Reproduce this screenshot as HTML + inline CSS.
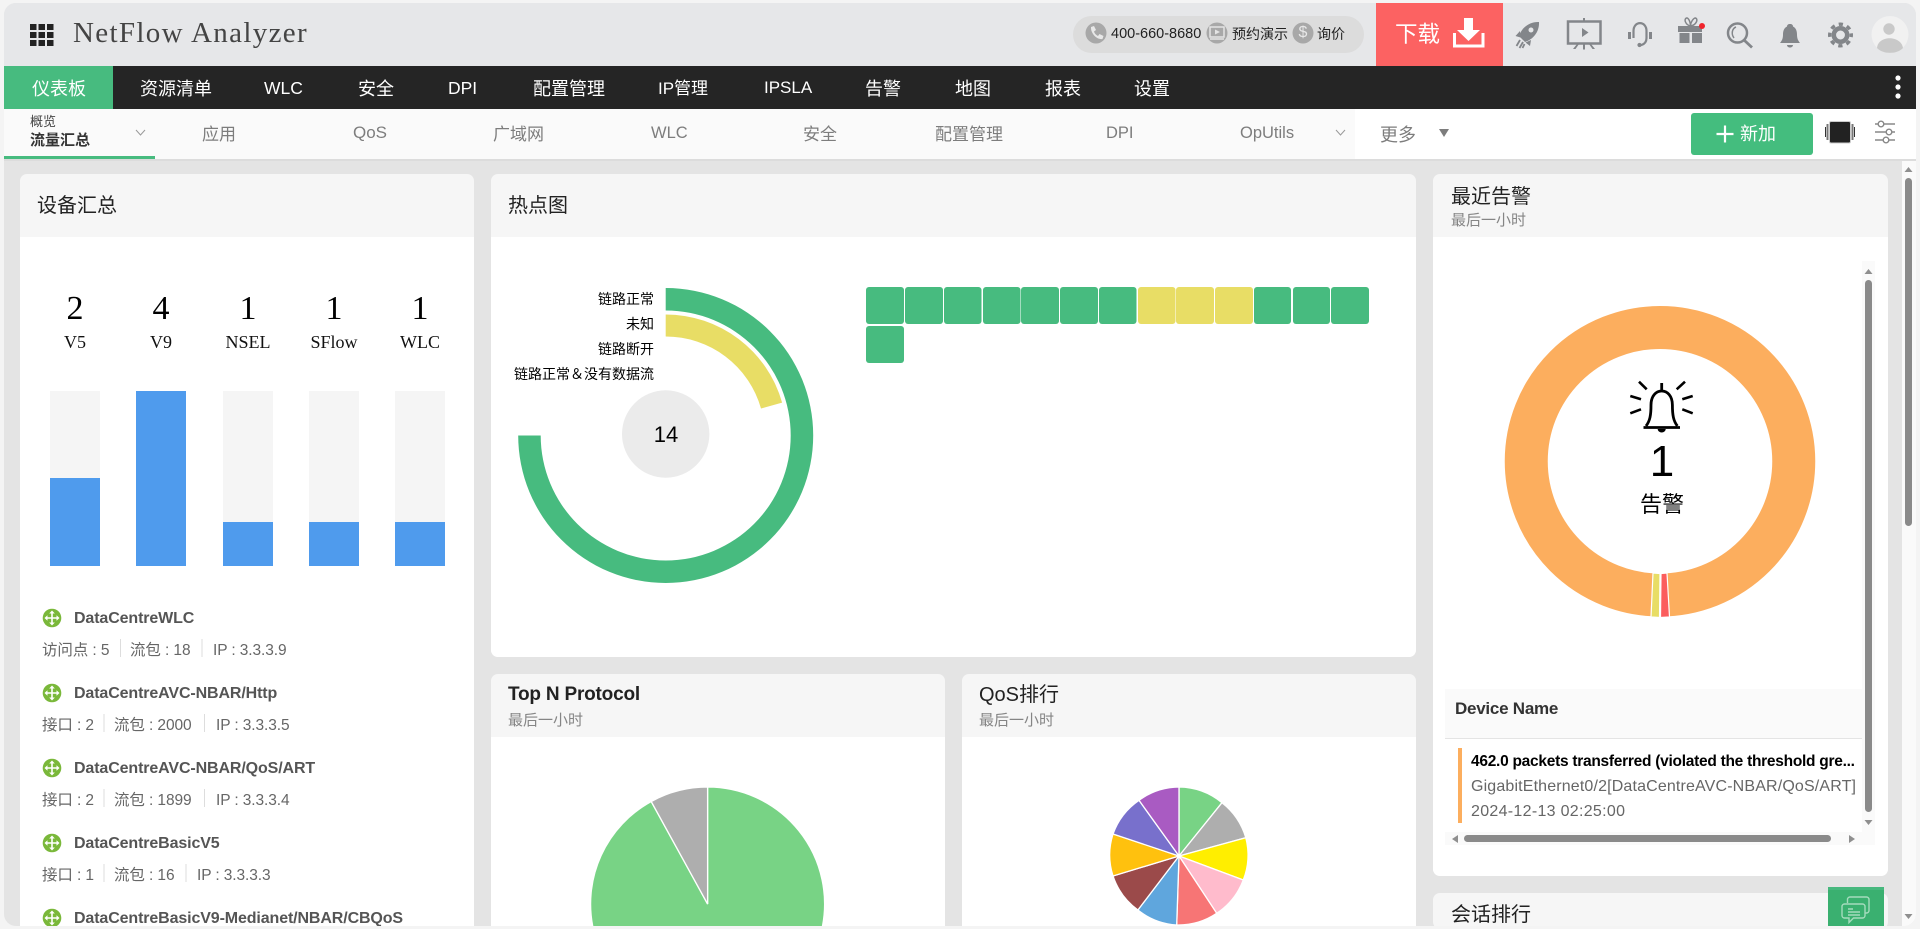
<!DOCTYPE html>
<html lang="zh"><head><meta charset="utf-8"><title>NetFlow Analyzer</title>
<style>
html,body{margin:0;padding:0;width:1920px;height:929px;overflow:hidden;background:#f4f4f4}
body{font-family:"Liberation Sans","Noto Sans CJK SC",sans-serif;color:#222}
#frame{position:absolute;left:4px;top:3px;width:1912px;height:923px;border-radius:12px;overflow:hidden;background:#e4e4e4}
#in{position:absolute;left:-4px;top:-3px;width:1920px;height:929px}
svg{position:absolute;left:0;top:0}
.t{position:absolute;white-space:nowrap;line-height:24px;height:24px}
.n{color:#fff;font-size:18px}
.s{color:#7d7d7d;font-size:17px}
.h{font-size:20px;color:#222}
.u{font-size:15px;color:#858585}
.l{font-size:14px;color:#000;text-align:right;width:150px;left:504px}
.d{font-size:16px;font-weight:700;color:#555;letter-spacing:-.12px;left:74px}
.m{font-size:15.5px;color:#666;letter-spacing:-.1px}
.c{text-align:center;width:80px}
.num{font-family:"Liberation Serif",serif;font-size:34px;color:#000}
.lab{font-family:"Liberation Serif",serif;font-size:18px;color:#111}
</style></head><body>
<div id="frame"><div id="in">
<svg width="1920" height="929" viewBox="0 0 1920 929">
<!-- top bar -->
<rect x="0" y="0" width="1920" height="66" fill="#e6e7e9"/>
<rect x="0" y="66" width="1920" height="43" fill="#252525"/>
<rect x="4" y="66" width="109" height="43" fill="#47bb7f"/>
<rect x="0" y="109" width="1355" height="50" fill="#fafafa"/>
<rect x="1355" y="109" width="565" height="50" fill="#fff"/>
<rect x="0" y="159" width="1920" height="2" fill="#dcdcdc"/>
<rect x="4" y="156" width="151" height="3" fill="#47bb7f"/>
<!-- grid -->
<g fill="#222"><rect x="30" y="24" width="6.500" height="6"/><rect x="38.500" y="24" width="6.500" height="6"/><rect x="47" y="24" width="6.500" height="6"/><rect x="30" y="32" width="6.500" height="6"/><rect x="38.500" y="32" width="6.500" height="6"/><rect x="47" y="32" width="6.500" height="6"/><rect x="30" y="40" width="6.500" height="6"/><rect x="38.500" y="40" width="6.500" height="6"/><rect x="47" y="40" width="6.500" height="6"/></g>
<!-- pill -->
<rect x="1073" y="16" width="291" height="37" rx="18.500" fill="#dcdcdc"/>
<circle cx="1096" cy="33" r="10.500" fill="#a8a8a8"/>
<path d="M1091 27l3-1 2 4-2 1.500c.5 2 2 3.500 4 4.500l1.500-2 4 2-1 3c-6 1-12-6-11.500-12z" fill="#e8e8e8"/>
<circle cx="1217" cy="33" r="10.500" fill="#a8a8a8"/>
<rect x="1210" y="27" width="14" height="10" fill="none" stroke="#e4e4e4" stroke-width="1.500"/><path d="M1215 29.500l5 2.500-5 2.500z" fill="#e4e4e4"/><path d="M1210 39h14" stroke="#e4e4e4" stroke-width="1.500"/>
<circle cx="1303" cy="33" r="10.500" fill="#a8a8a8"/>
<!-- download -->
<rect x="1376" y="3" width="127" height="63" fill="#fc6262"/>
<path d="M1464 18h9v12h7l-11.500 11-11.500-11h7z" fill="#fff"/>
<path d="M1454.500 33v13h28.500v-13" fill="none" stroke="#fff" stroke-width="3"/>
<!-- icons -->
<g fill="#83868a">
<path d="M1539 22c-9-.5-17 5-20 14l6 6c9-3 14.500-11 14-20z"/><path d="M1520 31l-4.500 5 5 1.500zM1531 40l-1 6-4.500-3.500z"/>
<path d="M1520 40l-3.500 6M1523 42l-3.500 6M1524.500 44l-2 4" stroke="#83868a" stroke-width="1.800"/>
<circle cx="1531" cy="30" r="2.500" fill="#e6e7e9"/>
<path d="M1582 28l6.500 4.500-6.500 4.500z"/>
<rect x="1583" y="18" width="2" height="3.500"/><rect x="1583" y="44" width="2" height="5.500"/><path d="M1573 49l4-5h2l-3.500 5zM1595 49l-4-5h-2l3.500 5z"/>
<rect x="1628" y="32" width="3" height="7"/><rect x="1649" y="32" width="3" height="7"/>
<path d="M1678 26h24v6h-24zM1679.500 33h10v10h-10zM1692 33h10v10h-10zM1689 26h3.500v6h-3.500z"/>
<path d="M1790 24c2 0 3 1 3 2.500 3 1.500 4 4.500 4 8 0 4 1 6 3 8.500h-20c2-2.500 3-4.500 3-8.500 0-3.500 1-6.500 4-8 0-1.500 1-2.500 3-2.500zM1787 45h6c0 1.500-1.500 2.500-3 2.500s-3-1-3-2.500z"/>
</g>
<g fill="none" stroke="#83868a">
<circle cx="1840.500" cy="35" r="6.700" stroke-width="4.500"/>
<circle cx="1840.500" cy="35" r="10.800" stroke-width="3.400" stroke-dasharray="4.300 4.182" stroke-dashoffset="2.150"/>
<rect x="1568" y="21.500" width="32.500" height="22" stroke-width="2.500"/>
<path d="M1633.500 38v-7c0-10.500 13-10.500 13 0v7c0 4-2 6-5 7h-2" stroke-width="2.200"/><circle cx="1639.500" cy="45" r="1.600" fill="#83868a"/>
<path d="M1690.500 26c-5-1-7-7-4-8 2-.5 4 4 4 8 0-4 3-8 5-8 3 1 1 7-5 8z" stroke-width="1.500"/>
<circle cx="1737.500" cy="33" r="9.500" stroke-width="2.500"/><path d="M1744 40l8 7.500" stroke-width="2.800"/><path d="M1736 27c-4 1.500-5 7-2 11" stroke-width="1.500"/>
</g>
<circle cx="1702" cy="26" r="3" fill="#f0242c"/>
<circle cx="1890" cy="34.500" r="18.500" fill="#f1f1f1"/>
<circle cx="1889" cy="29" r="5.700" fill="#c9c9c9"/>
<path d="M1877 48c1-13 24-13 26 0-6 6.500-20 6.500-26 0z" fill="#c9c9c9"/>
<!-- nav dots -->
<circle cx="1898" cy="78" r="2.600" fill="#fff"/><circle cx="1898" cy="87" r="2.600" fill="#fff"/><circle cx="1898" cy="96" r="2.600" fill="#fff"/>
<!-- subnav bits -->
<path d="M136 130l4.500 5 4.500-5M1336 130l4.500 5 4.500-5" fill="none" stroke="#999" stroke-width="1"/>
<path d="M1439 129h10l-5 8z" fill="#7d7d7d"/>
<rect x="1691" y="113" width="122" height="42" rx="3" fill="#44bd7e"/>
<path d="M1725 125.500v17M1716.500 134h17" stroke="#fff" stroke-width="2.200"/>
<rect x="1829.500" y="121.500" width="21" height="21.500" rx="1.500" fill="#222" stroke="#ccc"/>
<rect x="1826.500" y="124" width="2" height="16" fill="#777"/><rect x="1851.500" y="124" width="2" height="16" fill="#777"/>
<rect x="1825" y="127" width="1" height="10" fill="#333"/><rect x="1854" y="127" width="1" height="10" fill="#333"/>
<g stroke="#888" stroke-width="1.400" fill="#fff"><path d="M1875 124h20M1875 132h20M1875 140h20"/><circle cx="1881" cy="124" r="2.800"/><circle cx="1889" cy="132" r="2.800"/><circle cx="1886" cy="140" r="2.800"/></g>
<!-- scrollbar -->
<rect x="1902" y="161" width="18" height="768" fill="#fafafa"/>
<rect x="1905" y="178" width="7" height="348" rx="3.500" fill="#8a8a8a"/>
<path d="M1904.500 172l4-5 4 5zM1904.500 914l4 5 4-5z" fill="#8f8f8f"/>
<!-- cards -->
<rect x="20" y="174" width="454" height="755" rx="7" fill="#f6f6f6"/><rect x="20" y="237" width="454" height="692" fill="#fff"/>
<rect x="491" y="174" width="925" height="483" rx="7" fill="#f6f6f6"/><path d="M491 237h925v413a7 7 0 0 1-7 7H498a7 7 0 0 1-7-7z" fill="#fff"/>
<rect x="491" y="674" width="454" height="255" rx="7" fill="#f6f6f6"/><rect x="491" y="737" width="454" height="192" fill="#fff"/>
<rect x="962" y="674" width="454" height="255" rx="7" fill="#f6f6f6"/><rect x="962" y="737" width="454" height="192" fill="#fff"/>
<rect x="1433" y="174" width="455" height="702" rx="7" fill="#f6f6f6"/><path d="M1433 237h455v632a7 7 0 0 1-7 7h-441a7 7 0 0 1-7-7z" fill="#fff"/>
<rect x="1433" y="893" width="455" height="36" rx="7" fill="#f6f6f6"/>
<!-- bars -->
<g fill="#f5f5f5"><rect x="50" y="391" width="50" height="175"/><rect x="223" y="391" width="50" height="175"/><rect x="309" y="391" width="50" height="175"/><rect x="395" y="391" width="50" height="175"/></g>
<g fill="#4f9bed"><rect x="50" y="478" width="50" height="88"/><rect x="136" y="391" width="50" height="175"/><rect x="223" y="522" width="50" height="44"/><rect x="309" y="522" width="50" height="44"/><rect x="395" y="522" width="50" height="44"/></g>
<!-- device icons -->
<defs><g id="dev"><circle cx="0" cy="0" r="9.300" fill="#7ab83a"/><path d="M0-6.500v13M-6.500 0h13" stroke="#fff" stroke-width="1.600"/><path d="M0-7.500l-2.800 3h5.600zM0 7.500l-2.800-3h5.600zM-7.500 0l3-2.800v5.600zM7.500 0l-3-2.800v5.600z" fill="#fff"/></g></defs>
<use href="#dev" x="52" y="618"/><use href="#dev" x="52" y="693"/><use href="#dev" x="52" y="768"/><use href="#dev" x="52" y="843"/><use href="#dev" x="52" y="918"/>
<g fill="#ddd"><rect x="120" y="639" width="1" height="18"/><rect x="201.500" y="639" width="1" height="18"/><rect x="103.500" y="714" width="1" height="18"/><rect x="204" y="714" width="1" height="18"/><rect x="103.500" y="789" width="1" height="18"/><rect x="204" y="789" width="1" height="18"/><rect x="103.500" y="864" width="1" height="18"/><rect x="185.500" y="864" width="1" height="18"/></g>
<!-- gauge -->
<path d="M665.700 288A147.500 147.500 0 1 1 518.200 435.500L540.700 435.500A125 125 0 1 0 665.700 310.500Z" fill="#47bb7f"/>
<path d="M665.700 314.500A121 121 0 0 1 782.100 402.600L761 408.500A99 99 0 0 0 665.700 336.500Z" fill="#e8dd65"/>
<circle cx="665.700" cy="434" r="43.700" fill="#ebebeb"/>
<!-- tiles -->
<g fill="#47bb7f"><rect x="866" y="287" width="38" height="37" rx="3"/><rect x="905" y="287" width="38" height="37" rx="3"/><rect x="944" y="287" width="37.500" height="37" rx="3"/><rect x="983" y="287" width="37.500" height="37" rx="3"/><rect x="1021" y="287" width="38" height="37" rx="3"/><rect x="1060" y="287" width="38" height="37" rx="3"/><rect x="1099" y="287" width="37.500" height="37" rx="3"/><rect x="1254" y="287" width="37" height="37" rx="3"/><rect x="1293" y="287" width="37" height="37" rx="3"/><rect x="1331" y="287" width="38" height="37" rx="3"/><rect x="866" y="326" width="38" height="37" rx="3"/></g>
<g fill="#e8dd65"><rect x="1138" y="287" width="37.500" height="37" rx="3"/><rect x="1176" y="287" width="38" height="37" rx="3"/><rect x="1215" y="287" width="38" height="37" rx="3"/></g>
<!-- pie 1 -->
<g stroke="#fff" stroke-width="1.300"><path d="M707.600 904L707.600 787A117 117 0 0 1 821.900 929L593.300 929A117 117 0 0 1 651.200 801.500Z" fill="#78d385"/><path d="M707.600 904L651.200 801.500A117 117 0 0 1 707.600 787Z" fill="#aeaeae"/></g>
<!-- pie 2 -->
<g stroke="#fff" stroke-width="1.300">
<path d="M1179 856L1179 787A69 69 0 0 1 1222 802.700Z" fill="#78d385"/>
<path d="M1179 856L1222 802.700A69 69 0 0 1 1245.800 837.700Z" fill="#aeaeae"/>
<path d="M1179 856L1245.800 837.700A69 69 0 0 1 1243.300 880Z" fill="#ffee00"/>
<path d="M1179 856L1243.300 880A69 69 0 0 1 1216.700 913.300Z" fill="#ffbbcc"/>
<path d="M1179 856L1216.700 913.300A69 69 0 0 1 1176.700 925Z" fill="#f77575"/>
<path d="M1179 856L1176.700 925A69 69 0 0 1 1137.900 910Z" fill="#5fa6dd"/>
<path d="M1179 856L1137.900 910A69 69 0 0 1 1113 876Z" fill="#9b4a4a"/>
<path d="M1179 856L1113 876A69 69 0 0 1 1113 834Z" fill="#ffc10e"/>
<path d="M1179 856L1113 834A69 69 0 0 1 1139 800.300Z" fill="#7870cc"/>
<path d="M1179 856L1139 800.300A69 69 0 0 1 1179 787Z" fill="#a95bc2"/>
</g>
<!-- donut -->
<circle cx="1660" cy="461.250" r="133.750" fill="none" stroke="#fcae5e" stroke-width="43"/>
<g stroke="#fff" stroke-width="1.200"><path d="M1653 573L1660 573.500L1659.500 617.500L1651 617Z" fill="#e8dd65"/><path d="M1661 573.500L1667 573L1669.500 617L1660.500 617.500Z" fill="#fb5d5d"/></g>
<!-- bell -->
<g fill="none" stroke="#000" stroke-width="2.800"><path d="M1646 426c4-5 5-11 5-21 0-9 5-14 10.700-14s10.700 5 10.700 14c0 10 1 16 5 21"/><path d="M1643.500 427.500H1680" stroke-width="2.800"/><path d="M1661.700 383v8"/><path d="M1639 381.700l7.700 7.600M1685 381.700l-8.300 7.600M1630.300 396l10.700 3.300M1692.700 396l-10.400 3.300M1630.300 413.300l10.700-4M1692.700 413.300l-10.400-4" stroke-width="2.600"/></g>
<path d="M1657.700 429h8c0 2-2 3.500-4 3.500s-4-1.500-4-3.500z" fill="#000"/>
<!-- inner scroll -->
<rect x="1862" y="261" width="13" height="584" fill="#fafafa"/>
<rect x="1445" y="832" width="430" height="13" fill="#fafafa"/>
<rect x="1865" y="280" width="7" height="532" rx="3.500" fill="#8a8a8a"/>
<rect x="1464" y="835" width="367" height="7" rx="3.500" fill="#8a8a8a"/>
<path d="M1864.500 274l4-5 4 5zM1864.500 820l4 5 4-5zM1458 835l-6 4 6 4zM1849 835l6 4-6 4z" fill="#8f8f8f"/>
<rect x="1445" y="689" width="417" height="49" fill="#fafafa"/><rect x="1445" y="738" width="417" height="1" fill="#e4e4e4"/>
<rect x="1458" y="748" width="4" height="75" fill="#fcae5e"/>
<!-- chat -->
<rect x="1828" y="887" width="56" height="42" fill="#3ab070"/><rect x="1828" y="887" width="56" height="3" fill="#47b87e"/>
<g fill="none" stroke="#a5dbbd" stroke-width="1.400"><path d="M1847.500 903v-3.500a2.500 2.500 0 0 1 2.500-2.500h16.500a2.500 2.500 0 0 1 2.500 2.500v11a2.500 2.500 0 0 1-2.500 2.500h-1.500"/><path d="M1844.500 904h18a2.500 2.500 0 0 1 2.500 2.500v9a2.500 2.500 0 0 1-2.500 2.500h-9l-4.500 4.500v-4.500h-4.500a2.500 2.500 0 0 1-2.500-2.500v-9a2.500 2.500 0 0 1 2.500-2.500z" fill="#3ab070"/><path d="M1848 909h5M1848 912h12M1848 915h12" stroke-width="1.500"/></g>
</svg>

<div class="t" style="left:73px;top:21px;font-family:'Liberation Serif',serif;font-size:29px;letter-spacing:1.350px;color:#444">NetFlow Analyzer</div>
<div class="t" style="left:1111px;top:21.500px;font-size:14.500px;color:#222">400-660-8680</div>
<div class="t" style="left:1232px;top:21.500px;font-size:14px;color:#222">预约演示</div>
<div class="t" style="left:1298px;top:21px;font-size:16px;color:#e8e8e8;width:10px;text-align:center">$</div>
<div class="t" style="left:1317px;top:21.500px;font-size:14px;color:#222">询价</div>
<div class="t" style="left:1395px;top:23px;font-size:22.500px;color:#fff">下载</div>

<div class="t n" style="left:32px;top:77px">仪表板</div>
<div class="t n" style="left:140px;top:77px">资源清单</div>
<div class="t n" style="left:264px;top:76px;font-size:17.500px">WLC</div>
<div class="t n" style="left:358px;top:77px">安全</div>
<div class="t n" style="left:448px;top:76px;font-size:17.500px">DPI</div>
<div class="t n" style="left:533px;top:77px">配置管理</div>
<div class="t n" style="left:658px;top:77px;font-size:17px">IP管理</div>
<div class="t n" style="left:764px;top:76px;font-size:17px">IPSLA</div>
<div class="t n" style="left:865px;top:77px">告警</div>
<div class="t n" style="left:955px;top:77px">地图</div>
<div class="t n" style="left:1045px;top:77px">报表</div>
<div class="t n" style="left:1134px;top:77px">设置</div>

<div class="t" style="left:30px;top:110px;font-size:13px;color:#444">概览</div>
<div class="t" style="left:30px;top:129px;font-size:15px;font-weight:700;color:#333">流量汇总</div>
<div class="t s" style="left:202px;top:123px">应用</div>
<div class="t s" style="left:353px;top:121px;font-size:17px">QoS</div>
<div class="t s" style="left:493px;top:123px">广域网</div>
<div class="t s" style="left:651px;top:121px;font-size:16.500px">WLC</div>
<div class="t s" style="left:803px;top:123px">安全</div>
<div class="t s" style="left:935px;top:123px">配置管理</div>
<div class="t s" style="left:1106px;top:121px;font-size:16.500px">DPI</div>
<div class="t s" style="left:1240px;top:121px;font-size:16.500px">OpUtils</div>
<div class="t s" style="left:1380px;top:123px;font-size:18px">更多</div>
<div class="t" style="left:1740px;top:122px;font-size:18px;color:#fff">新加</div>

<div class="t h" style="left:37px;top:194px">设备汇总</div>
<div class="t h" style="left:508px;top:194px">热点图</div>
<div class="t h" style="left:1451px;top:185px">最近告警</div>
<div class="t u" style="left:1451px;top:209px">最后一小时</div>
<div class="t" style="left:508px;top:683px;font-size:19px;font-weight:700;color:#222;letter-spacing:-.2px">Top N Protocol</div>
<div class="t u" style="left:508px;top:709px">最后一小时</div>
<div class="t h" style="left:979px;top:683px">QoS排行</div>
<div class="t u" style="left:979px;top:709px">最后一小时</div>
<div class="t h" style="left:1451px;top:903px">会话排行</div>

<div class="t c num" style="left:35px;top:297px">2</div><div class="t c lab" style="left:35px;top:330px">V5</div>
<div class="t c num" style="left:121px;top:297px">4</div><div class="t c lab" style="left:121px;top:330px">V9</div>
<div class="t c num" style="left:208px;top:297px">1</div><div class="t c lab" style="left:208px;top:330px">NSEL</div>
<div class="t c num" style="left:294px;top:297px">1</div><div class="t c lab" style="left:294px;top:330px">SFlow</div>
<div class="t c num" style="left:380px;top:297px">1</div><div class="t c lab" style="left:380px;top:330px">WLC</div>

<div class="t d" style="top:607px">DataCentreWLC</div>
<div class="t m" style="left:42px;top:639px">访问点 : 5</div><div class="t m" style="left:130px;top:639px">流包 : 18</div><div class="t m" style="left:213px;top:639px">IP : 3.3.3.9</div>
<div class="t d" style="top:682px">DataCentreAVC-NBAR/Http</div>
<div class="t m" style="left:42px;top:714px">接口 : 2</div><div class="t m" style="left:114px;top:714px">流包 : 2000</div><div class="t m" style="left:216px;top:714px">IP : 3.3.3.5</div>
<div class="t d" style="top:757px">DataCentreAVC-NBAR/QoS/ART</div>
<div class="t m" style="left:42px;top:789px">接口 : 2</div><div class="t m" style="left:114px;top:789px">流包 : 1899</div><div class="t m" style="left:216px;top:789px">IP : 3.3.3.4</div>
<div class="t d" style="top:832px">DataCentreBasicV5</div>
<div class="t m" style="left:42px;top:864px">接口 : 1</div><div class="t m" style="left:114px;top:864px">流包 : 16</div><div class="t m" style="left:197px;top:864px">IP : 3.3.3.3</div>
<div class="t d" style="top:907px;height:22px">DataCentreBasicV9-Medianet/NBAR/CBQoS</div>

<div class="t l" style="top:287px">链路正常</div>
<div class="t l" style="top:312px">未知</div>
<div class="t l" style="top:337px">链路断开</div>
<div class="t l" style="top:362px">链路正常＆没有数据流</div>
<div class="t" style="left:646px;top:422.500px;width:40px;text-align:center;font-size:22px;color:#000">14</div>

<div class="t" style="left:1622px;top:440px;width:80px;height:44px;line-height:44px;text-align:center;font-size:44px;color:#000">1</div>
<div class="t" style="left:1622px;top:493px;width:80px;text-align:center;font-size:22px;color:#000">告警</div>
<div class="t" style="left:1455px;top:697px;font-size:17px;font-weight:700;color:#333;letter-spacing:-.25px">Device Name</div>
<div class="t" style="left:1471px;top:750px;font-size:15.500px;font-weight:700;color:#000;letter-spacing:-.27px">462.0 packets transferred (violated the threshold gre...</div>
<div class="t" style="left:1471px;top:775px;font-size:16px;color:#666;letter-spacing:.15px">GigabitEthernet0/2[DataCentreAVC-NBAR/QoS/ART]</div>
<div class="t" style="left:1471px;top:800px;font-size:16px;color:#666;letter-spacing:.3px">2024-12-13 02:25:00</div>
</div></div>
</body></html>
